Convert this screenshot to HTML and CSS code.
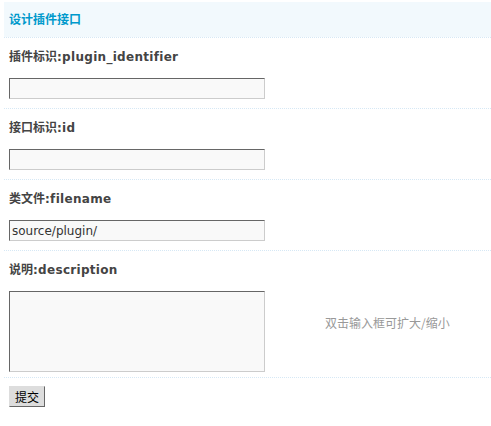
FILE: index.html
```html
<!DOCTYPE html>
<html lang="zh-CN">
<head>
<meta charset="utf-8">
<title>设计插件接口</title>
<link rel="stylesheet" href="styles.css">
</head>
<body>
<form class="panel">
  <div class="partition">设计插件接口</div>
  <div class="row">
    <div class="label"><span class="cjk">插件标识</span>:plugin_identifier</div>
    <input class="txt" type="text" value="">
  </div>
  <div class="row">
    <div class="label"><span class="cjk">接口标识</span>:id</div>
    <input class="txt" type="text" value="">
  </div>
  <div class="row">
    <div class="label"><span class="cjk">类文件</span>:filename</div>
    <input class="txt" type="text" value="source/plugin/">
  </div>
  <div class="row row-area">
    <div class="label"><span class="cjk">说明</span>:description</div>
    <div class="area-line">
      <textarea class="txt area"></textarea>
      <span class="tips">双击输入框可扩大/缩小</span>
    </div>
  </div>
  <div class="row row-btn">
    <button class="btn" type="button">提交</button>
  </div>
</form>
</body>
</html>
```

FILE: styles.css
```css
html, body {
  margin: 0;
  padding: 0;
  background: #fff;
}
body {
  padding: 2px 0 0 4px;
  font: 12px/18px "DejaVu Sans", "Noto Sans CJK SC", sans-serif;
  color: #333;
}
.panel {
  display: flex;
  flex-direction: column;
}
.partition {
  background: #F2F9FD;
  color: #0099CC;
  font-weight: bold;
  font-family: "Noto Sans CJK SC", sans-serif;
  padding: 8px 5px 9px;
  height: 18px;
  line-height: 18px;
}
.row {
  border-top: 1px dotted #D6E8F5;
  padding: 9px 5px 9px;
  display: flex;
  flex-direction: column;
  align-items: flex-start;
}
.label {
  font-weight: bold;
  font-size: 12px;
  line-height: 18px;
  height: 18px;
  color: #444;
  margin-bottom: 13px;
  white-space: nowrap;
  letter-spacing: 0.3px;
}
.cjk {
  font-family: "Noto Sans CJK SC", sans-serif;
  font-size: 12px;
  line-height: 18px;
  letter-spacing: 0;
}
.txt {
  box-sizing: border-box;
  width: 256px;
  height: 21px;
  margin: 0;
  padding: 1px 2px;
  border-style: solid;
  border-width: 1px;
  border-color: #666 #ccc #ccc #666;
  background: #F9F9F9;
  color: #333;
  font: 12px/17px "DejaVu Sans", sans-serif;
  outline: none;
}
.row-area {
  padding-bottom: 5px;
}
.area-line {
  display: flex;
  align-items: flex-start;
}
.area {
  height: 81px;
  resize: none;
  display: block;
}
.tips {
  margin-left: 60px;
  margin-top: 23px;
  color: #999;
  font-family: "Noto Sans CJK SC", sans-serif;
  font-size: 12px;
  line-height: 18px;
}
.row-btn {
  padding-top: 8px;
}
.btn {
  box-sizing: border-box;
  height: 21px;
  margin: 0;
  padding: 1px 5px;
  border-style: solid;
  border-width: 1px;
  border-color: #ddd #666 #666 #ddd;
  background: #ddd;
  color: #000;
  font: 12px/17px "Noto Sans CJK SC", sans-serif;
}
```
